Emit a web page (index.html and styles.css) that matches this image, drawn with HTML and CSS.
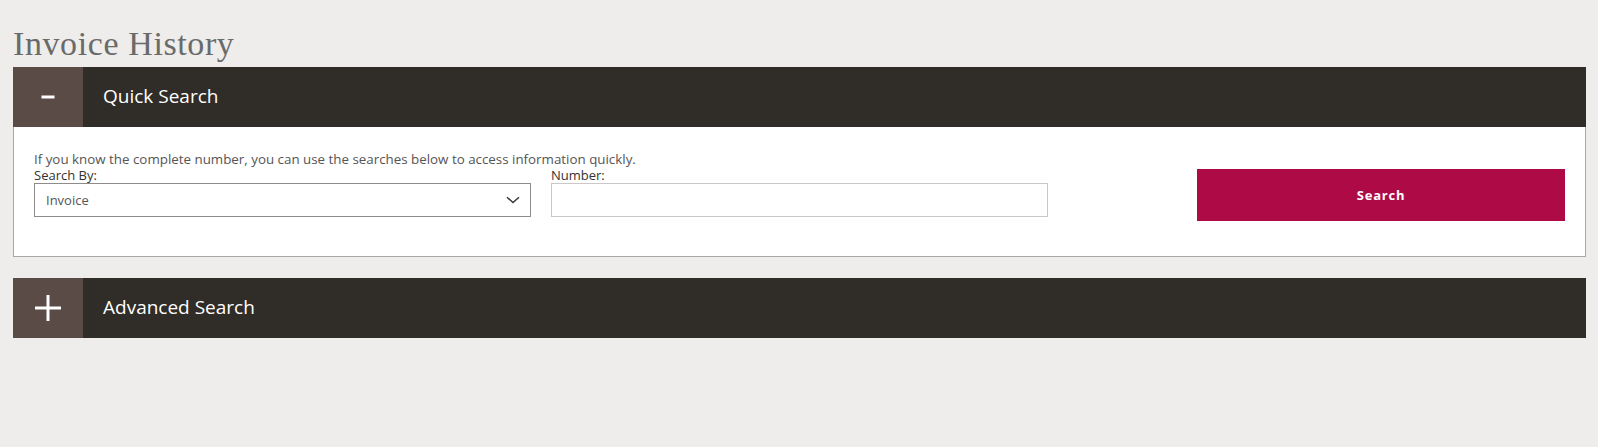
FILE: index.html
```html
<!DOCTYPE html>
<html lang="en">
<head>
<meta charset="utf-8">
<title>Invoice History</title>
<link rel="stylesheet" href="styles.css">
</head>
<body>
<main class="page">
  <h1 class="title">Invoice History</h1>

  <section class="panel">
    <div class="panel-head">
      <div class="toggle"><svg width="14" height="4" viewBox="0 0 14 4"><rect x="0.5" y="0.5" width="13" height="3" fill="#fff"/></svg></div>
      <h2 class="panel-title">Quick Search</h2>
    </div>
    <div class="panel-body">
      <p class="intro">If you know the complete number, you can use the searches below to access information quickly.</p>
      <div class="row">
        <div class="field">
          <label class="label">Search By:</label>
          <div class="select">
            <span class="select-value">Invoice</span>
            <svg class="chevron" width="14" height="8" viewBox="0 0 14 8"><path d="M1 1.2 L7 6.6 L13 1.2" fill="none" stroke="#3a3a3a" stroke-width="1.5"/></svg>
          </div>
        </div>
        <div class="field">
          <label class="label">Number:</label>
          <div class="input"></div>
        </div>
        <button class="search-btn">Search</button>
      </div>
    </div>
  </section>

  <section class="panel panel-collapsed">
    <div class="panel-head">
      <div class="toggle"><svg width="26" height="26" viewBox="0 0 26 26"><rect x="0" y="11.5" width="26" height="3" fill="#fff"/><rect x="11.5" y="0" width="3" height="26" fill="#fff"/></svg></div>
      <h2 class="panel-title">Advanced Search</h2>
    </div>
  </section>
</main>
</body>
</html>
```

FILE: styles.css
```css
html, body {
  margin: 0;
  padding: 0;
  background: #eeedeb;
}

.page {
  padding: 0 12px 0 13px;
  font-family: "Open Sans", "Noto Sans", sans-serif;
}

.title {
  margin: 0;
  padding-top: 24px;
  height: 43px;
  font-family: "Liberation Serif", serif;
  font-weight: normal;
  font-size: 34px;
  line-height: 40px;
  color: #6a6a6a;
  letter-spacing: 0.6px;
}

.panel {
  margin-bottom: 21px;
}

.panel-head {
  display: flex;
  align-items: center;
  height: 60px;
  background: #302c27;
}

.toggle {
  width: 70px;
  height: 60px;
  background: #5a4b46;
  display: flex;
  align-items: center;
  justify-content: center;
}

.panel-title {
  margin: 0 0 2px 20px;
  font-size: 19px;
  font-weight: normal;
  color: #ffffff;
  line-height: 24px;
}

.panel-body {
  background: #ffffff;
  border: 1px solid #a9a8a6;
  border-top: none;
  padding: 23px 20px 35px 20px;
}

.intro {
  margin: 0;
  font-size: 13.35px;
  line-height: 18px;
  color: #555555;
}

.row {
  display: flex;
  align-items: flex-start;
}

.field {
  width: 497px;
  margin-right: 20px;
}

.label {
  display: block;
  font-size: 13px;
  line-height: 15px;
  color: #333333;
  font-weight: 500;
}

.select {
  height: 32px;
  border: 1px solid #8d8c8a;
  display: flex;
  align-items: center;
  justify-content: space-between;
  padding: 0 10px 0 11px;
}

.select-value {
  font-size: 13px;
  color: #555555;
}

.input {
  height: 32px;
  border: 1px solid #c9c8c6;
}

.search-btn {
  margin-left: auto;
  margin-top: 1px;
  width: 368px;
  height: 52px;
  border: none;
  background: #ae0b46;
  color: #ffffff;
  font-family: "Open Sans", "Noto Sans", sans-serif;
  font-size: 13px;
  font-weight: bold;
  letter-spacing: 0.8px;
}
```
